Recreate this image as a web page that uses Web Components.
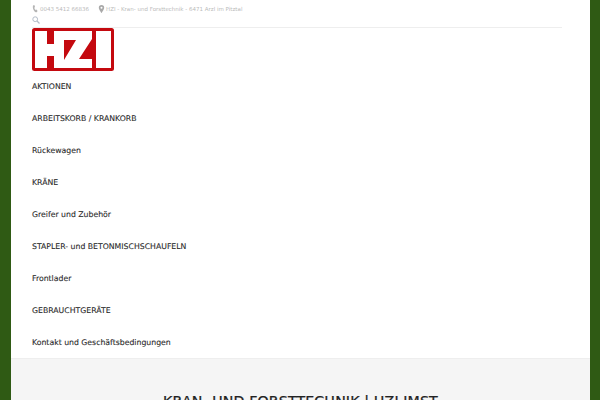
<!DOCTYPE html>
<html>
<head>
<meta charset="utf-8">
<style>
    html, body { margin: 0; height: 400px; overflow: hidden; background: #2f5a14; }
    body { padding: 0 10px 0 11px; font-family: "DejaVu Sans", sans-serif; }
</style>
</head>
<body>
<site-page>
    <top-bar></top-bar>
    <site-logo></site-logo>
    <main-nav>
        <nav-item>AKTIONEN</nav-item>
        <nav-item>ARBEITSKORB / KRANKORB</nav-item>
        <nav-item>Rückewagen</nav-item>
        <nav-item>KRÄNE</nav-item>
        <nav-item>Greifer und Zubehör</nav-item>
        <nav-item>STAPLER- und BETONMISCHSCHAUFELN</nav-item>
        <nav-item>Frontlader</nav-item>
        <nav-item>GEBRAUCHTGERÄTE</nav-item>
        <nav-item>Kontakt und Geschäftsbedingungen</nav-item>
    </main-nav>
    <site-footer>KRAN- UND FORSTTECHNIK | HZI IMST</site-footer>
</site-page>
<script>
function define(name, html) {
    customElements.define(name, class extends HTMLElement {
        constructor() {
            super();
            this.attachShadow({ mode: 'open' }).innerHTML = html;
        }
    });
}

define('site-page', `
    <style>
        :host { display: block; background: #fff; height: 400px; overflow: hidden; }
    </style>
    <slot></slot>
`);

define('top-bar', `
    <style>
        :host { display: block; margin: 0 28px 0 21px; height: 27px; border-bottom: 1px solid #eee; color: #bbb; font-size: 5.5px; }
        .info { display: flex; align-items: center; gap: 9px; height: 16px; padding-top: 1px; box-sizing: border-box; }
        .part { display: flex; align-items: center; gap: 2px; }
        .part + .part { gap: 1px; }
        .search { display: block; height: 8px; }
        svg { display: block; }
    </style>
    <div class="info">
        <span class="part">
            <svg width="6" height="8" viewBox="0 0 6 8"><path d="M1 .5 2.300 0l.8 2-.8.7c.2.9.6 1.600 1.300 2.200l.9-.5L5.600 6 4.700 7.300C2.400 7.500.2 3.500 1 .5z" fill="#b5b5b5"/></svg>
            0043 5412 66836
        </span>
        <span class="part">
            <svg width="7" height="8" viewBox="0 0 7 8"><path fill-rule="evenodd" d="M3.500 0a2.700 2.700 0 0 1 2.700 2.700C6.200 4.500 3.500 8 3.500 8S.8 4.500.8 2.700A2.700 2.700 0 0 1 3.500 0zm0 1.700a1 1 0 1 0 0 2 1 1 0 0 0 0-2z" fill="#a9a9a9"/></svg>
            HZI - Kran- und Forsttechnik - 6471 Arzl im Pitztal
        </span>
    </div>
    <svg class="search" width="8" height="8" viewBox="0 0 8 8"><circle cx="3.200" cy="3.200" r="2.400" fill="none" stroke="#b3bcc8" stroke-width="1"/><path d="M5 5l2.500 2.500" stroke="#b3bcc8" stroke-width="1.200"/></svg>
`);

define('site-logo', `
    <style>
        :host { display: block; width: 82px; height: 43px; margin-left: 21px; }
        svg { display: block; }
    </style>
    <svg width="82" height="43" viewBox="0 0 82 43">
        <rect width="82" height="43" rx="2.500" fill="#c4090f"/>
        <path d="M3 3h12v13h7V3h10v37H22V28h-7v12H3z" fill="#fff"/>
        <path d="M32 3h28v8L47 31h13v9H32v-8L44 12H32z" fill="#fff"/>
        <path d="M64 3h15v37H64z" fill="#fff"/>
    </svg>
`);

define('main-nav', `
    <style>
        :host { display: block; margin: -1px 0 0 21px; }
    </style>
    <slot></slot>
`);

define('nav-item', `
    <style>
        :host { display: block; height: 31px; padding-top: 1px; line-height: 32px; color: #2a2a2a; font-size: 7.75px; -webkit-text-stroke: .1px #2a2a2a; }
    </style>
    <slot></slot>
`);

define('site-footer', `
    <style>
        :host { display: block; background: #f5f5f5; border-top: 1px solid #eee; height: 60px; text-align: center; font-size: 14.2px; color: #222; line-height: 16px; padding-top: 34px; letter-spacing: .12px; -webkit-text-stroke: .25px #222; }
    </style>
    <slot></slot>
`);
</script>
</body>
</html>
